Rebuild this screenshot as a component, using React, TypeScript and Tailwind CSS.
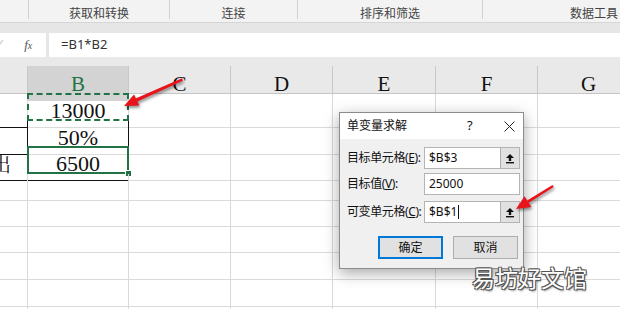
import React from "react";

const COLS = ["A", "B", "C", "D", "E", "F", "G"];
const GRID = "grid grid-cols-[28px_101px_102px_102px_103px_102px_102px]";
const ROW_H = ["h-[27px]", "h-[26px]", "h-[27px]", "h-[27px]", "h-[26px]", "h-[26px]", "h-[27px]", "h-[27px]", "h-[27px]"];

function UpBtn() {
  return (
    <div className="w-[19px] h-full bg-[#e1e1e1] border-l border-[#adadad] flex items-center justify-center shrink-0">
      <svg width="10" height="11" viewBox="0 0 10 11">
        <path d="M5 1 L9 5 L6.2 5 L6.2 8 L3.8 8 L3.8 5 L1 5 Z" fill="#111" />
        <rect x="1" y="9" width="8" height="1.4" fill="#111" />
      </svg>
    </div>
  );
}

export default function App() {
  const serif = "font-['Liberation_Serif','Times_New_Roman',serif]";
  const cjk = "font-['Noto_Sans','Noto_Sans_CJK_SC',sans-serif]";
  return (
    <div className={`relative w-[620px] h-[309px] overflow-hidden bg-white ${cjk}`}>
      {/* Ribbon group labels */}
      <div className="flex h-[23px] bg-[#f3f3f3] border-b border-[#d6d6d6] overflow-hidden">
        <div className="w-[29px] shrink-0 h-[19px] border-r border-[#d2d2d2]" />
        <div className="w-[141px] shrink-0 h-[19px] border-r border-[#d2d2d2] flex justify-center pt-[6px] text-[12px] leading-[16px] text-[#444]">获取和转换</div>
        <div className="w-[128px] shrink-0 h-[19px] border-r border-[#d2d2d2] flex justify-center pt-[6px] text-[12px] leading-[16px] text-[#444]">连接</div>
        <div className="w-[185px] shrink-0 h-[19px] border-r border-[#d2d2d2] flex justify-center pt-[6px] text-[12px] leading-[16px] text-[#444]">排序和筛选</div>
        <div className="w-[222px] shrink-0 h-[19px] flex justify-center pt-[6px] text-[12px] leading-[16px] text-[#444]">数据工具</div>
      </div>
      {/* band */}
      <div className="h-[10px] bg-[#e6e6e6]" />
      {/* formula bar */}
      <div className="flex h-[24px] bg-[#e6e6e6]">
        <div className="w-[46px] shrink-0 bg-white flex items-center overflow-hidden">
          <span className="ml-[-5px] text-[12px] text-[#c8c8c8]">✓</span>
          <span className={`ml-[21px] italic text-[13px] text-[#555] ${serif}`}>f<span className="text-[10px]">x</span></span>
        </div>
        <div className="ml-[3px] flex-1 bg-white flex items-center pl-[12px] text-[13px] text-[#333]">=B1*B2</div>
      </div>
      <div className="h-[9px] bg-[#e9e9e9]" />
      {/* column headers */}
      <div className={`${GRID} h-[28px] bg-[#e9e9e9] border-b border-[#c6c6c6]`}>
        {COLS.map((c) => (
          <div
            key={c}
            className={`border-r border-[#c8c8c8] flex items-center justify-center pt-[3px] text-[21px] ${serif} ${
              c === "B" ? "bg-[#d3d3d3] text-[#217346]" : "text-[#111]"
            }`}
          >
            {c !== "A" ? c : ""}
          </div>
        ))}
      </div>
      {/* body rows */}
      {ROW_H.map((h, r) => (
        <div key={r} className={`${GRID} ${h}`}>
          {COLS.map((c) => {
            const borderR = (r === 1 || r === 2) && (c === "A" || c === "B") ? "border-r-[#111]" : "border-r-[#dadada]";
            const borderB = (r === 0 && c === "A") || (r === 1 && c === "A") || (r === 2 && (c === "A" || c === "B")) ? "border-b-[#111]" : "border-b-[#dadada]";
            let content: React.ReactNode = null;
            if (c === "B" && r === 0) content = "13000";
            if (c === "B" && r === 1) content = "50%";
            if (c === "B" && r === 2) content = "6500";
            return (
              <div
                key={c}
                className={`relative border-r border-b ${borderR} ${borderB} flex items-center ${c === "A" ? "justify-start overflow-hidden" : "justify-center"} text-[22px] text-[#111] ${serif}`}
              >
                {c === "A" && r === 2 ? <span className="ml-[-9px] text-[20px] font-['Noto_Serif_CJK_SC','Noto_Sans_CJK_SC',serif]">出</span> : content}
                {c === "B" && r === 0 && (
                  <div className="absolute left-[-1px] top-[-1px] w-[102px] h-[28px] border-2 border-dashed border-[#217346]" />
                )}
                {c === "B" && r === 2 && (
                  <div className="absolute left-[-1px] top-[-1px] w-[102px] h-[28px] border-2 border-[#217346]">
                    <div className="absolute right-[-5px] bottom-[-5px] w-[7px] h-[7px] bg-[#217346] border border-white" />
                  </div>
                )}
              </div>
            );
          })}
        </div>
      ))}

      {/* Dialog */}
      <div className="absolute left-[339px] top-[112px] w-[185px] h-[157px] border border-[#8c8c8c] bg-[#f0f0f0] shadow-[0_4px_14px_rgba(0,0,0,0.35)] flex flex-col">
        <div className="h-[26px] bg-white flex items-center pl-[7px] text-[12px] text-[#111]">
          <span>单变量求解</span>
          <span className="ml-[60px] text-[13px]">?</span>
          <svg className="ml-[31px]" width="11" height="11" viewBox="0 0 11 11">
            <path d="M0.5 0.5 L10.5 10.5 M10.5 0.5 L0.5 10.5" stroke="#222" strokeWidth="1" />
          </svg>
        </div>
        <div className="flex flex-col pl-[7px] pr-[4px] pt-[8px] text-[12px] text-[#111]">
          <div className="flex items-center h-[22px]">
            <span className="w-[77px] shrink-0 whitespace-nowrap tracking-[-0.4px]">目标单元格(<span className="underline">E</span>):</span>
            <div className="w-[96px] shrink-0 h-[22px] border border-[#b4b4b4] bg-white flex items-stretch">
              <span className="flex-1 flex items-center pl-[4px]">$B$3</span>
              <UpBtn />
            </div>
          </div>
          <div className="flex items-center h-[22px] mt-[4px]">
            <span className="w-[77px] shrink-0 whitespace-nowrap tracking-[-0.4px]">目标值(<span className="underline">V</span>):</span>
            <div className="w-[96px] shrink-0 h-[22px] border border-[#b4b4b4] bg-white flex items-center pl-[4px]">25000</div>
          </div>
          <div className="flex items-center h-[22px] mt-[6px]">
            <span className="w-[77px] shrink-0 whitespace-nowrap tracking-[-0.4px]">可变单元格(<span className="underline">C</span>):</span>
            <div className="w-[96px] shrink-0 h-[22px] border border-[#b4b4b4] bg-white flex items-stretch">
              <span className="flex-1 flex items-center pl-[4px]">
                $B$1<span className="inline-block w-[1px] h-[14px] bg-[#111] ml-[1px]" />
              </span>
              <UpBtn />
            </div>
          </div>
          <div className="flex mt-[13px] pl-[31px] gap-[10px]">
            <div className="w-[65px] h-[23px] bg-[#e1e1e1] border-2 border-[#0078d7] flex items-center justify-center">确定</div>
            <div className="w-[65px] h-[23px] bg-[#e1e1e1] border border-[#adadad] flex items-center justify-center">取消</div>
          </div>
        </div>
      </div>

      {/* Arrows */}
      <svg className="absolute left-0 top-0 pointer-events-none drop-shadow-[1px_2px_1.5px_rgba(0,0,0,0.45)]" width="620" height="309" viewBox="0 0 620 309">
        <path d="M182 78.3 L183 80.7 L136.9 101.8 L135.6 98.6 Z" fill="#e8141b" />
        <polygon points="124,106 139.4,105.6 134,94.6" fill="#e8141b" />
        <path d="M552.5 185 L553.7 187 L528.6 203 L527.2 200.4 Z" fill="#e8141b" />
        <polygon points="516,209 531.3,206.9 524.5,196.3" fill="#e8141b" />
      </svg>

      {/* Watermark */}
      <div className="absolute left-[472px] top-[262px] text-[23px] leading-[30px] text-white font-['Noto_Sans_CJK_SC',sans-serif] [text-shadow:-1px_-1px_0_#555,1px_-1px_0_#555,-1px_1px_0_#555,1px_1px_0_#555,1px_2px_2px_rgba(0,0,0,0.4)]">
        易坊好文馆
      </div>
    </div>
  );
}
